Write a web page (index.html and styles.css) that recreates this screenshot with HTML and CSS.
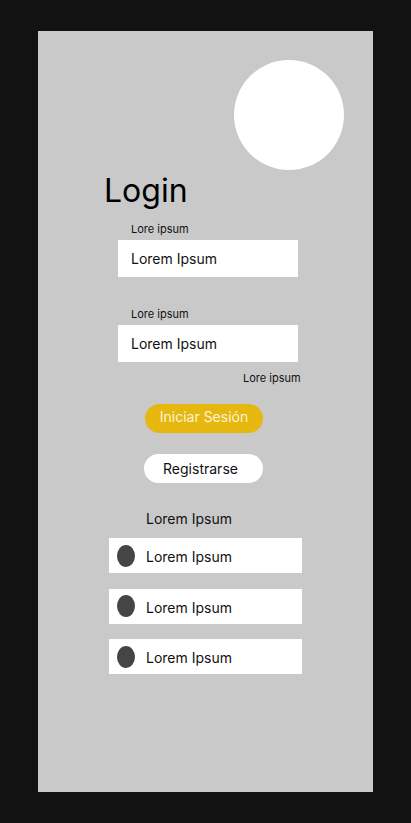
FILE: index.html
```html
<!DOCTYPE html>
<html lang="es">
<head>
<meta charset="utf-8">
<title>Login</title>
<link rel="stylesheet" href="styles.css">
</head>
<body>
<main class="panel">
  <div class="avatar"></div>
  <h1 class="title">Login</h1>
  <div class="field">
    <label class="field-label">Lore ipsum</label>
    <div class="input">Lorem Ipsum</div>
  </div>
  <div class="field field-second">
    <label class="field-label">Lore ipsum</label>
    <div class="input">Lorem Ipsum</div>
  </div>
  <div class="forgot">Lore ipsum</div>
  <button class="btn btn-primary">Iniciar Sesión</button>
  <button class="btn btn-secondary">Registrarse</button>
  <div class="list-title">Lorem Ipsum</div>
  <ul class="list">
    <li class="list-item"><span class="dot"></span><span>Lorem Ipsum</span></li>
    <li class="list-item"><span class="dot"></span><span>Lorem Ipsum</span></li>
    <li class="list-item"><span class="dot"></span><span>Lorem Ipsum</span></li>
  </ul>
</main>
</body>
</html>
```

FILE: styles.css
```css
* { box-sizing: border-box; }

html, body {
  margin: 0;
  padding: 0;
}

body {
  background: #121212;
  width: 411px;
  height: 823px;
  padding: 31px 0 0 38px;
  font-family: Inter, "Noto Sans", sans-serif;
  color: #111111;
}

.panel {
  width: 335px;
  height: 761px;
  background: #c9c9c9;
  display: flex;
  flex-direction: column;
  align-items: flex-start;
}

.avatar {
  width: 110px;
  height: 110px;
  border-radius: 50%;
  background: #ffffff;
  margin: 29px 0 0 196px;
}

.title {
  margin: 1px 0 0 66px;
  font-size: 32px;
  line-height: 40px;
  font-weight: 400;
  color: #000000;
}

.field {
  display: flex;
  flex-direction: column;
  align-items: flex-start;
  margin: 12px 0 0 80px;
}

.field-second {
  margin-top: 31px;
}

.field-label {
  font-size: 11px;
  line-height: 13px;
  margin: 0 0 4px 13px;
}

.input {
  width: 180px;
  height: 37px;
  background: #ffffff;
  padding-left: 13px;
  font-size: 14px;
  line-height: 37px;
}

.forgot {
  margin: 10px 0 0 205px;
  font-size: 11px;
  line-height: 13px;
}

.btn {
  border: none;
  border-radius: 15px;
  height: 29px;
  font-family: inherit;
  font-size: 14px;
  padding: 0;
  cursor: pointer;
}

.btn-primary {
  width: 118px;
  margin: 19px 0 0 107px;
  background: #e6b80f;
  color: #fbf3da;
  line-height: 26px;
  padding-bottom: 3px;
}

.btn-secondary {
  width: 119px;
  margin: 21px 0 0 106px;
  background: #ffffff;
  color: #111111;
  line-height: 29px;
  padding-right: 6px;
}

.list-title {
  margin: 27px 0 0 108px;
  font-size: 14px;
  line-height: 17px;
}

.list {
  list-style: none;
  margin: 11px 0 0 71px;
  padding: 0;
  display: flex;
  flex-direction: column;
  gap: 15.5px;
}

.list-item {
  width: 193px;
  height: 35px;
  background: #ffffff;
  display: flex;
  align-items: center;
  padding: 2px 0 0 8px;
  font-size: 14px;
}

.dot {
  width: 18px;
  height: 22px;
  border-radius: 50%;
  background: #454545;
  margin: -2px 11px 0 0;
}
```
